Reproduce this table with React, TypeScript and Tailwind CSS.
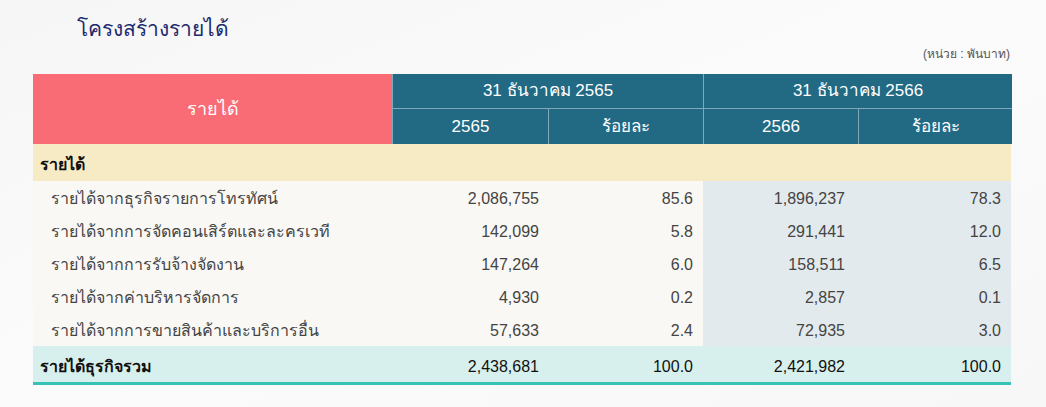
import React from "react";

const rows = [
  { label: "รายได้จากธุรกิจรายการโทรทัศน์", a: "2,086,755", ap: "85.6", b: "1,896,237", bp: "78.3" },
  { label: "รายได้จากการจัดคอนเสิร์ตและละครเวที", a: "142,099", ap: "5.8", b: "291,441", bp: "12.0" },
  { label: "รายได้จากการรับจ้างจัดงาน", a: "147,264", ap: "6.0", b: "158,511", bp: "6.5" },
  { label: "รายได้จากค่าบริหารจัดการ", a: "4,930", ap: "0.2", b: "2,857", bp: "0.1" },
  { label: "รายได้จากการขายสินค้าและบริการอื่น", a: "57,633", ap: "2.4", b: "72,935", bp: "3.0" },
];

const cols = "grid grid-cols-[359px_156px_155px_155px_153px]";

export default function App() {
  return (
    <div
      className="w-[1046px] h-[407px] bg-gradient-to-br from-[#f6f6f6] via-[#fbfbfb] to-[#f7f7f7] overflow-hidden"
      style={{ fontFamily: '"Liberation Sans", "Noto Sans", sans-serif' }}
    >
      <h1 className="pl-[77px] pt-[15px] text-[21px] leading-[28px] text-[#1e2a6e]">โครงสร้างรายได้</h1>
      <div className="w-[978px] ml-[33px]">
        <div className="text-right text-[12px] leading-[16px] text-[#555] pr-[1px] mt-[3px] mb-[12px]">(หน่วย : พันบาท)</div>

        {/* header */}
        <div className="grid grid-cols-[359px_1fr] h-[70px]">
          <div className="bg-[#f96b75] text-white text-[18px] flex items-center justify-center">รายได้</div>
          <div className="bg-[#226a84] text-white text-[17px] grid grid-cols-[156px_155px_155px_153px] grid-rows-2 border-l border-[#7fa9b9]">
            <div className="col-span-2 flex items-center justify-center border-b border-r border-[#7fa9b9]">31 ธันวาคม 2565</div>
            <div className="col-span-2 flex items-center justify-center border-b border-[#7fa9b9]">31 ธันวาคม 2566</div>
            <div className="flex items-center justify-center border-r border-[#7fa9b9]">2565</div>
            <div className="flex items-center justify-center border-r border-[#7fa9b9]">ร้อยละ</div>
            <div className="flex items-center justify-center border-r border-[#7fa9b9]">2566</div>
            <div className="flex items-center justify-center">ร้อยละ</div>
          </div>
        </div>

        {/* section */}
        <div className="bg-[#f7ebc6] h-[37px] flex items-center pl-[7px] pt-[5px] text-[16px] font-bold text-[#111]">รายได้</div>

        {/* data rows */}
        {rows.map((r) => (
          <div key={r.label} className={`${cols} h-[33px] text-[16px] text-[#444]`}>
            <div className="bg-[#f9f8f4] flex items-center pl-[18px] pt-[3px]">{r.label}</div>
            <div className="bg-[#f9f8f4] flex items-center justify-end pr-[9px] pt-[3px]">{r.a}</div>
            <div className="bg-[#f9f8f4] flex items-center justify-end pr-[10px] pt-[3px]">{r.ap}</div>
            <div className="bg-[#e3eaed] flex items-center justify-end pr-[13px] pt-[3px]">{r.b}</div>
            <div className="bg-[#e3eaed] flex items-center justify-end pr-[10px] pt-[3px]">{r.bp}</div>
          </div>
        ))}

        {/* total */}
        <div className={`${cols} h-[39px] pt-[5px] bg-[#d8f0ed] border-b-[3px] border-[#36c2b4] text-[16px] text-[#111]`}>
          <div className="flex items-center pl-[7px] font-bold text-[16px]">รายได้ธุรกิจรวม</div>
          <div className="flex items-center justify-end pr-[9px]">2,438,681</div>
          <div className="flex items-center justify-end pr-[10px]">100.0</div>
          <div className="flex items-center justify-end pr-[13px]">2,421,982</div>
          <div className="flex items-center justify-end pr-[10px]">100.0</div>
        </div>
      </div>
    </div>
  );
}
